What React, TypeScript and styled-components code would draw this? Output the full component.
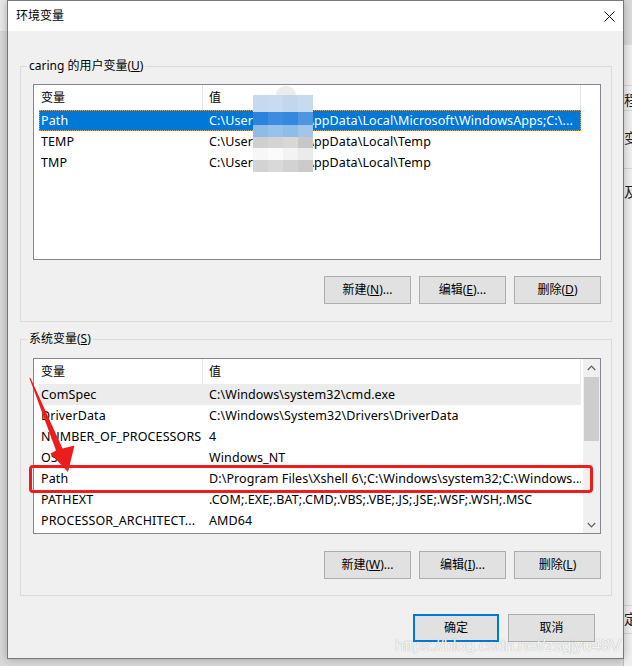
import React from "react";
import styled, { createGlobalStyle, css } from "styled-components";

const FONT = `"Noto Sans", "Noto Sans CJK SC", sans-serif`;

const GlobalStyle = createGlobalStyle`
  html, body { margin: 0; padding: 0; }
  body { background: #e4e4e4; font-family: ${FONT}; }
  * { box-sizing: border-box; }
`;

const Screen = styled.div`
  position: relative;
  width: 632px;
  height: 666px;
  overflow: hidden;
  background: linear-gradient(to bottom, #e9e9e9 0, #e9e9e9 31px, #d9d9d9 31px);
  font-family: ${FONT};
  font-size: 12px;
  color: #000;
`;

const Backdrop = styled.div`
  position: absolute;
  left: 623px;
  top: 0;
  width: 9px;
  height: 666px;
  overflow: hidden;
  background: linear-gradient(to bottom, #dcdcdc 0, #dcdcdc 45px, #f0f0f0 45px);
  border-left: 1px solid #bdbdbd;
`;

const BackChar = styled.div<{ $top: number }>`
  position: absolute;
  left: 0;
  top: ${(p) => p.$top}px;
  font-size: 14px;
  line-height: 16px;
  color: #222;
`;

const BackLine = styled.div<{ $top: number }>`
  position: absolute;
  left: 0;
  right: 0;
  top: ${(p) => p.$top}px;
  height: 1px;
  background: #d6d6d6;
`;

const Dialog = styled.div`
  position: relative;
  z-index: 1;
  margin-left: 7px;
  width: 617px;
  height: 659px;
  border: 1px solid #787878;
  background: #f0f0f0;
  display: flex;
  flex-direction: column;
  box-shadow: 0 0 9px rgba(0, 0, 0, 0.28);
`;

const TitleBar = styled.div`
  flex: none;
  height: 30px;
  background: #fff;
  display: flex;
  align-items: center;
  justify-content: space-between;
  padding: 0 8px;
`;

const TitleText = styled.span`
  font-size: 12px;
  line-height: 16px;
`;

const Content = styled.div`
  flex: 1;
  display: flex;
  flex-direction: column;
  padding: 35px 11px 0 12px;
`;

const GroupBox = styled.div<{ $pt: number; $pb: number; $mt?: number }>`
  position: relative;
  border: 1px solid #dcdcdc;
  padding: ${(p) => p.$pt}px 10px ${(p) => p.$pb}px 12px;
  margin-top: ${(p) => p.$mt ?? 0}px;
`;

const Legend = styled.div`
  position: absolute;
  top: -9px;
  left: 6px;
  padding: 0 2px;
  background: #f0f0f0;
  line-height: 16px;
  white-space: nowrap;
`;

const Mn = styled.span`
  text-decoration: underline;
  text-underline-offset: 1px;
`;

const ListBox = styled.div`
  height: 176px;
  border: 1px solid #828790;
  background: #fff;
  display: flex;
`;

const ListMain = styled.div`
  flex: 1;
  min-width: 0;
  display: flex;
  flex-direction: column;
`;

const HeaderRow = styled.div`
  flex: none;
  height: 25px;
  display: flex;
`;

const HeaderCell = styled.div<{ $w: number; $pl: number }>`
  width: ${(p) => p.$w}px;
  padding-left: ${(p) => p.$pl}px;
  border-right: 1px solid #e5e5e5;
  display: flex;
  align-items: center;
  line-height: 16px;
`;

const Row = styled.div<{ $state?: "selected" | "hover" }>`
  flex: none;
  height: 21px;
  width: 542px;
  margin-left: 5px;
  display: flex;
  align-items: center;
  font-size: 12.5px;
  letter-spacing: 0.1px;
  line-height: 16px;
  white-space: nowrap;
  ${(p) =>
    p.$state === "selected" &&
    css`
      background: #0078d7;
      color: #fff;
      outline: 1px dotted #f39a33;
      outline-offset: -1px;
    `}
  ${(p) =>
    p.$state === "hover" &&
    css`
      background: #ececec;
    `}
`;

const NameCell = styled.div`
  width: 164px;
  flex: none;
  padding-left: 2px;
  overflow: hidden;
`;

const ValueCell = styled.div`
  flex: 1;
  min-width: 0;
  padding-left: 6px;
  overflow: hidden;
`;

const ScrollBar = styled.div`
  flex: none;
  width: 17px;
  background: #f0f0f0;
  display: flex;
  flex-direction: column;
`;

const ScrollArrow = styled.div`
  flex: none;
  height: 17px;
  display: flex;
  align-items: center;
  justify-content: center;
`;

const ScrollTrack = styled.div`
  flex: 1;
  padding: 1px 1px 0 1px;
`;

const Thumb = styled.div`
  height: 64px;
  background: #cdcdcd;
`;

const ButtonRow = styled.div<{ $mt: number; $gap: number; $pr: number }>`
  display: flex;
  justify-content: flex-end;
  gap: ${(p) => p.$gap}px;
  margin-top: ${(p) => p.$mt}px;
  padding-right: ${(p) => p.$pr}px;
`;

const Button = styled.button<{ $w: number; $primary?: boolean }>`
  width: ${(p) => p.$w}px;
  height: 28px;
  padding: 0;
  background: #e1e1e1;
  border: 1px solid #adadad;
  font-family: ${FONT};
  font-size: 12px;
  line-height: 16px;
  color: #000;
  display: flex;
  align-items: center;
  justify-content: center;
  ${(p) =>
    p.$primary &&
    css`
      border: 2px solid #0078d7;
    `}
`;

const Mosaic = styled.div`
  position: absolute;
  z-index: 2;
  left: 253px;
  top: 95px;
  display: grid;
  grid-template-columns: 15px 15px 15px 15px;
  grid-template-rows: 17px 13px 12px 11px 12px 12px;
`;

const MosaicCap = styled.div`
  position: absolute;
  z-index: 2;
  left: 276px;
  top: 86px;
  width: 20px;
  height: 9px;
  border-radius: 10px 10px 0 0;
  background: #ececec;
`;

const Tile = styled.div<{ $c: string }>`
  background: ${(p) => p.$c};
`;

const RedBox = styled.div`
  position: absolute;
  z-index: 3;
  left: 29px;
  top: 465px;
  width: 564px;
  height: 28px;
  border: 3px solid #ee1d1d;
  border-radius: 4px;
`;

const ArrowSvg = styled.svg`
  position: absolute;
  z-index: 3;
  left: 24px;
  top: 372px;
`;

const Watermark = styled.div`
  position: absolute;
  z-index: 4;
  left: 395px;
  top: 639px;
  font-family: "Liberation Sans", Arial, sans-serif;
  font-size: 17px;
  line-height: 14px;
  color: rgba(255, 255, 255, 0.9);
  text-shadow: 0 0 1px rgba(90, 90, 90, 0.55);
  letter-spacing: -0.3px;
  white-space: nowrap;
`;

type VarRow = { name: string; value: string; state?: "selected" | "hover" };

const userRows: VarRow[] = [
  { name: "Path", value: "C:\\Users\\caring\\AppData\\Local\\Microsoft\\WindowsApps;C:\\...", state: "selected" },
  { name: "TEMP", value: "C:\\Users\\caring\\AppData\\Local\\Temp" },
  { name: "TMP", value: "C:\\Users\\caring\\AppData\\Local\\Temp" },
];

const sysRows: VarRow[] = [
  { name: "ComSpec", value: "C:\\Windows\\system32\\cmd.exe", state: "hover" },
  { name: "DriverData", value: "C:\\Windows\\System32\\Drivers\\DriverData" },
  { name: "NUMBER_OF_PROCESSORS", value: "4" },
  { name: "OS", value: "Windows_NT" },
  { name: "Path", value: "D:\\Program Files\\Xshell 6\\;C:\\Windows\\system32;C:\\Windows..." },
  { name: "PATHEXT", value: ".COM;.EXE;.BAT;.CMD;.VBS;.VBE;.JS;.JSE;.WSF;.WSH;.MSC" },
  { name: "PROCESSOR_ARCHITECT...", value: "AMD64" },
];

const mosaicColors = [
  ["#c6daee", "#c9dcef", "#c2d7ec", "#c7dbee"],
  ["#2b84dc", "#3a8de0", "#3389de", "#4d97e2"],
  ["#8fbbe7", "#99c2e9", "#90bde8", "#a1c6ea"],
  ["#cfcfcf", "#d5d4d4", "#dad8d7", "#c8c7c7"],
  ["#f7f7f7", "#fbfbfb", "#f3f3f3", "#ebebeb"],
  ["#d3d3d3", "#d9d9d9", "#d2d2d2", "#cbcbcb"],
];

const Chevron = ({ up }: { up?: boolean }) => (
  <svg width="9" height="6" viewBox="0 0 9 6">
    <path
      d={up ? "M0.8 5 L4.5 1.2 L8.2 5" : "M0.8 1 L4.5 4.8 L8.2 1"}
      fill="none"
      stroke="#606060"
      strokeWidth="1.2"
    />
  </svg>
);

const VarList = ({ rows, scroll }: { rows: VarRow[]; scroll?: boolean }) => (
  <ListBox>
    <ListMain>
      <HeaderRow>
        <HeaderCell $w={169} $pl={7}>变量</HeaderCell>
        <HeaderCell $w={378} $pl={6}>值</HeaderCell>
      </HeaderRow>
      {rows.map((r) => (
        <Row key={r.name} $state={r.state}>
          <NameCell>{r.name}</NameCell>
          <ValueCell>{r.value}</ValueCell>
        </Row>
      ))}
    </ListMain>
    {scroll && (
      <ScrollBar>
        <ScrollArrow>
          <Chevron up />
        </ScrollArrow>
        <ScrollTrack>
          <Thumb />
        </ScrollTrack>
        <ScrollArrow>
          <Chevron />
        </ScrollArrow>
      </ScrollBar>
    )}
  </ListBox>
);

export default function App() {
  return (
    <>
      <GlobalStyle />
      <Screen>
        <Backdrop>
          <BackLine $top={85} />
          <BackChar $top={92}>程</BackChar>
          <BackLine $top={110} />
          <BackChar $top={130}>变</BackChar>
          <BackLine $top={168} />
          <BackChar $top={184}>及</BackChar>
          <BackLine $top={605} />
          <BackChar $top={611}>定</BackChar>
          <BackLine $top={633} />
        </Backdrop>
        <Dialog>
          <TitleBar>
            <TitleText>环境变量</TitleText>
            <svg width="11" height="11" viewBox="0 0 11 11">
              <path d="M0.5 0.5 L10.5 10.5 M10.5 0.5 L0.5 10.5" stroke="#111" strokeWidth="1" />
            </svg>
          </TitleBar>
          <Content>
            <GroupBox $pt={17} $pb={17}>
              <Legend>
                caring 的用户变量(<Mn>U</Mn>)
              </Legend>
              <VarList rows={userRows} />
              <ButtonRow $mt={16} $gap={8} $pr={0}>
                <Button $w={87}>新建(<Mn>N</Mn>)...</Button>
                <Button $w={87}>编辑(<Mn>E</Mn>)...</Button>
                <Button $w={87}>删除(<Mn>D</Mn>)</Button>
              </ButtonRow>
            </GroupBox>
            <GroupBox $pt={18} $pb={16} $mt={17}>
              <Legend>
                系统变量(<Mn>S</Mn>)
              </Legend>
              <VarList rows={sysRows} scroll />
              <ButtonRow $mt={17} $gap={8} $pr={0}>
                <Button $w={87}>新建(<Mn>W</Mn>)...</Button>
                <Button $w={87}>编辑(<Mn>I</Mn>)...</Button>
                <Button $w={87}>删除(<Mn>L</Mn>)</Button>
              </ButtonRow>
            </GroupBox>
            <ButtonRow $mt={18} $gap={9} $pr={17}>
              <Button $w={86} $primary>确定</Button>
              <Button $w={87}>取消</Button>
            </ButtonRow>
          </Content>
        </Dialog>
        <MosaicCap />
        <Mosaic>
          {mosaicColors.flatMap((row, i) =>
            row.map((c, j) => <Tile key={`${i}-${j}`} $c={c} />)
          )}
        </Mosaic>
        <RedBox />
        <ArrowSvg width="56" height="104" viewBox="0 0 56 104">
          <polygon
            points="5.2,5.6 6.8,6.4 38.5,76.5 50.5,73.5 44,100 26.5,81.5 32,78.5"
            fill="#ee1d1d"
          />
        </ArrowSvg>
        <Watermark>https://blog.csdn.net/zsgjyu48V</Watermark>
      </Screen>
    </>
  );
}
